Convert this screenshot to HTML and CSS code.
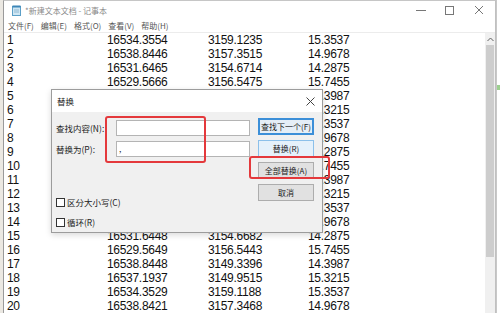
FILE: index.html
```html
<!DOCTYPE html>
<html lang="zh-CN">
<head>
    <meta charset="UTF-8">
    <meta name="viewport" content="width=device-width, initial-scale=1.0">
    <title>替换 - 记事本</title>
    <link rel="stylesheet" href="styles.css">
</head>
<body>
    <div class="desk">
        <div class="side-left"></div>

        <div class="window">
            <!-- Title bar -->
            <div class="titlebar">
                <svg class="app-icon" width="9" height="11" viewBox="0 0 9 11">
                    <rect x="0.5" y="1.5" width="8" height="9" fill="#cfe6f3" stroke="#5b9fc7"/>
                    <rect x="0.5" y="0.5" width="8" height="2" fill="#3d86b8"/>
                    <line x1="2" y1="5" x2="7" y2="5" stroke="#8fb8d2"/>
                    <line x1="2" y1="7" x2="7" y2="7" stroke="#8fb8d2"/>
                </svg>
                <div class="title-text">*新建文本文档 - 记事本</div>
                <div class="controls">
                    <div class="ctl">
                        <svg width="10" height="10" viewBox="0 0 10 10"><line x1="0" y1="5.5" x2="10" y2="5.5" stroke="#777"/></svg>
                    </div>
                    <div class="ctl">
                        <svg width="10" height="10" viewBox="0 0 10 10"><rect x="1.5" y="1.5" width="8" height="8" fill="none" stroke="#777"/></svg>
                    </div>
                    <div class="ctl ctl-close">
                        <svg width="10" height="10" viewBox="0 0 10 10"><path d="M1 1 L9 9 M9 1 L1 9" stroke="#777"/></svg>
                    </div>
                </div>
            </div>

            <!-- Menu -->
            <div class="menubar">
                <span>文件(F)</span>
                <span>编辑(E)</span>
                <span>格式(O)</span>
                <span>查看(V)</span>
                <span>帮助(H)</span>
            </div>

            <div class="editor">
                <!-- rows 5-14: columns 2 and 3 sit under the dialog -->
                <div class="text">
                    <div class="row"><span>1</span><span>16534.3554</span><span>3159.1235</span><span>15.3537</span></div>
                    <div class="row"><span>2</span><span>16538.8446</span><span>3157.3515</span><span>14.9678</span></div>
                    <div class="row"><span>3</span><span>16531.6465</span><span>3154.6714</span><span>14.2875</span></div>
                    <div class="row"><span>4</span><span>16529.5666</span><span>3156.5475</span><span>15.7455</span></div>
                    <div class="row"><span>5</span><span></span><span></span><span>14.3987</span></div>
                    <div class="row"><span>6</span><span></span><span></span><span>15.3215</span></div>
                    <div class="row"><span>7</span><span></span><span></span><span>15.3537</span></div>
                    <div class="row"><span>8</span><span></span><span></span><span>14.9678</span></div>
                    <div class="row"><span>9</span><span></span><span></span><span>14.2875</span></div>
                    <div class="row"><span>10</span><span></span><span></span><span>15.7455</span></div>
                    <div class="row"><span>11</span><span></span><span></span><span>14.3987</span></div>
                    <div class="row"><span>12</span><span></span><span></span><span>15.3215</span></div>
                    <div class="row"><span>13</span><span></span><span></span><span>15.3537</span></div>
                    <div class="row"><span>14</span><span></span><span></span><span>14.9678</span></div>
                    <div class="row"><span>15</span><span>16531.6448</span><span>3154.6682</span><span>14.2875</span></div>
                    <div class="row"><span>16</span><span>16529.5649</span><span>3156.5443</span><span>15.7455</span></div>
                    <div class="row"><span>17</span><span>16538.8448</span><span>3149.3396</span><span>14.3987</span></div>
                    <div class="row"><span>18</span><span>16537.1937</span><span>3149.9515</span><span>15.3215</span></div>
                    <div class="row"><span>19</span><span>16534.3529</span><span>3159.1188</span><span>15.3537</span></div>
                    <div class="row"><span>20</span><span>16538.8421</span><span>3157.3468</span><span>14.9678</span></div>
                </div>

                <div class="scrollbar">
                    <div class="scroll-up">
                        <svg width="7" height="5" viewBox="0 0 7 5"><path d="M0.5 4 L3.5 1 L6.5 4" fill="none" stroke="#606060"/></svg>
                    </div>
                    <div class="scroll-thumb"></div>
                </div>
            </div>
        </div>

        <div class="side-right">
            <div class="side-mark"></div>
        </div>
    </div>

    <!-- Replace dialog -->
    <div class="dialog">
        <div class="dialog-title">
            <span>替换</span>
            <svg width="9" height="9" viewBox="0 0 9 9"><path d="M0.5 0.5 L8.5 8.5 M8.5 0.5 L0.5 8.5" stroke="#444"/></svg>
        </div>
        <div class="dialog-body">
            <div class="form">
                <div class="field">
                    <label>查找内容(N):</label>
                    <div class="input"></div>
                </div>
                <div class="field">
                    <label>替换为(P):</label>
                    <div class="input">,</div>
                </div>
                <div class="options">
                    <div class="check"><span class="box"></span>区分大小写(C)</div>
                    <div class="check"><span class="box"></span>循环(R)</div>
                </div>
            </div>
            <div class="buttons">
                <div class="btn btn-default">查找下一个(F)</div>
                <div class="btn btn-hover">替换(R)</div>
                <div class="btn">全部替换(A)</div>
                <div class="btn">取消</div>
            </div>
        </div>
    </div>

    <!-- Highlight marks -->
    <div class="mark mark-fields"></div>
    <div class="mark mark-replace-all"></div>
</body>
</html>
```

FILE: styles.css
```css
body {
    margin: 0;
    padding: 0;
    width: 500px;
    height: 313px;
    overflow: hidden;
    background-color: #fff;
    font-family: "Noto Sans", "Noto Sans CJK SC", sans-serif;
    position: relative;
}

.desk {
    display: flex;
    height: 313px;
}

.side-left {
    width: 3px;
    background-color: #ebe8e2;
}

.side-right {
    width: 4px;
    background-color: #fff;
    border-left: 1px solid #c8c8c8;
    box-sizing: border-box;
    padding-top: 85px;
}

.side-mark {
    height: 5px;
    background-color: #9ccf8f;
}

.window {
    flex: 1;
    display: flex;
    flex-direction: column;
    border-left: 1px solid #9a9a9a;
    border-right: 1px solid #c0c0c0;
    border-top: 1px solid #c6c6c6;
    background-color: #fff;
}

.titlebar {
    height: 18px;
    display: flex;
    align-items: center;
    padding-left: 8px;
}

.app-icon {
    margin-right: 4px;
}

.title-text {
    font-size: 8px;
    color: #8a8a8a;
    font-family: "Noto Sans CJK SC", sans-serif;
    flex: 1;
}

.controls {
    display: flex;
    height: 18px;
}

.ctl {
    width: 28px;
    display: flex;
    align-items: center;
    justify-content: center;
}

.ctl-close {
    width: 32px;
}

.menubar {
    height: 13px;
    display: flex;
    align-items: center;
    gap: 7px;
    padding-left: 4px;
    font-family: "Noto Sans CJK SC", sans-serif;
    font-size: 8px;
    color: #555;
    border-bottom: 1px solid #ececec;
}

.editor {
    flex: 1;
    display: flex;
    min-height: 0;
}

.text {
    flex: 1;
    padding-left: 3px;
}

.row {
    display: grid;
    grid-template-columns: 100px 101px 100px auto;
    height: 14px;
    line-height: 14px;
    font-family: "Liberation Sans", Arial, sans-serif;
    font-size: 12px;
    letter-spacing: -0.3px;
    color: #111;
}

.scrollbar {
    width: 10px;
    background-color: #f0f0f0;
    display: flex;
    flex-direction: column;
}

.scroll-up {
    height: 12px;
    display: flex;
    align-items: center;
    justify-content: center;
}

.scroll-thumb {
    height: 212px;
    margin: 0 1px;
    background-color: #cdcdcd;
}

/* Replace dialog */
.dialog {
    position: absolute;
    left: 51px;
    top: 89px;
    width: 272px;
    height: 144px;
    box-sizing: border-box;
    border: 1px solid #9c9c9c;
    background-color: #f0f0f0;
    box-shadow: 0 2px 6px rgba(0, 0, 0, 0.15);
    font-family: "Noto Sans CJK SC", sans-serif;
    font-size: 8.5px;
    color: #222;
}

.dialog-title {
    height: 22px;
    background-color: #fff;
    display: flex;
    align-items: center;
    justify-content: space-between;
    padding: 0 7px 0 5px;
}

.dialog-body {
    display: flex;
    gap: 8px;
    padding: 6px 8px 0 4px;
}

.form {
    flex: 1;
    padding-top: 2px;
}

.field {
    display: flex;
    align-items: center;
    height: 16px;
    margin-bottom: 5px;
}

.field label {
    width: 60px;
}

.input {
    width: 134px;
    height: 16px;
    box-sizing: border-box;
    background-color: #fff;
    border: 1px solid #b4b4b4;
    padding-left: 2px;
    line-height: 12px;
}

.options {
    margin-top: 38px;
}

.check {
    display: flex;
    align-items: center;
    height: 14px;
    margin-bottom: 6px;
}

.box {
    width: 7px;
    height: 7px;
    border: 1px solid #333;
    background-color: #fff;
    margin-right: 2px;
}

.buttons {
    display: flex;
    flex-direction: column;
    gap: 5px;
}

.btn {
    width: 56px;
    height: 17px;
    box-sizing: border-box;
    border: 1px solid #adadad;
    background-color: #e1e1e1;
    display: flex;
    align-items: center;
    justify-content: center;
    font-size: 8px;
    color: #222;
}

.btn-default {
    border: 2px solid #3c8fd8;
    background-color: #e5eef6;
}

.btn-hover {
    border-color: #8cc0ea;
    background-color: #e5f1fb;
}

/* Red highlight frames */
.mark {
    position: absolute;
    border: 2px solid #e4393c;
    border-radius: 3px;
    box-sizing: border-box;
}

.mark-fields {
    left: 105px;
    top: 116px;
    width: 101px;
    height: 47px;
}

.mark-replace-all {
    left: 249px;
    top: 156px;
    width: 81px;
    height: 23px;
}
```
